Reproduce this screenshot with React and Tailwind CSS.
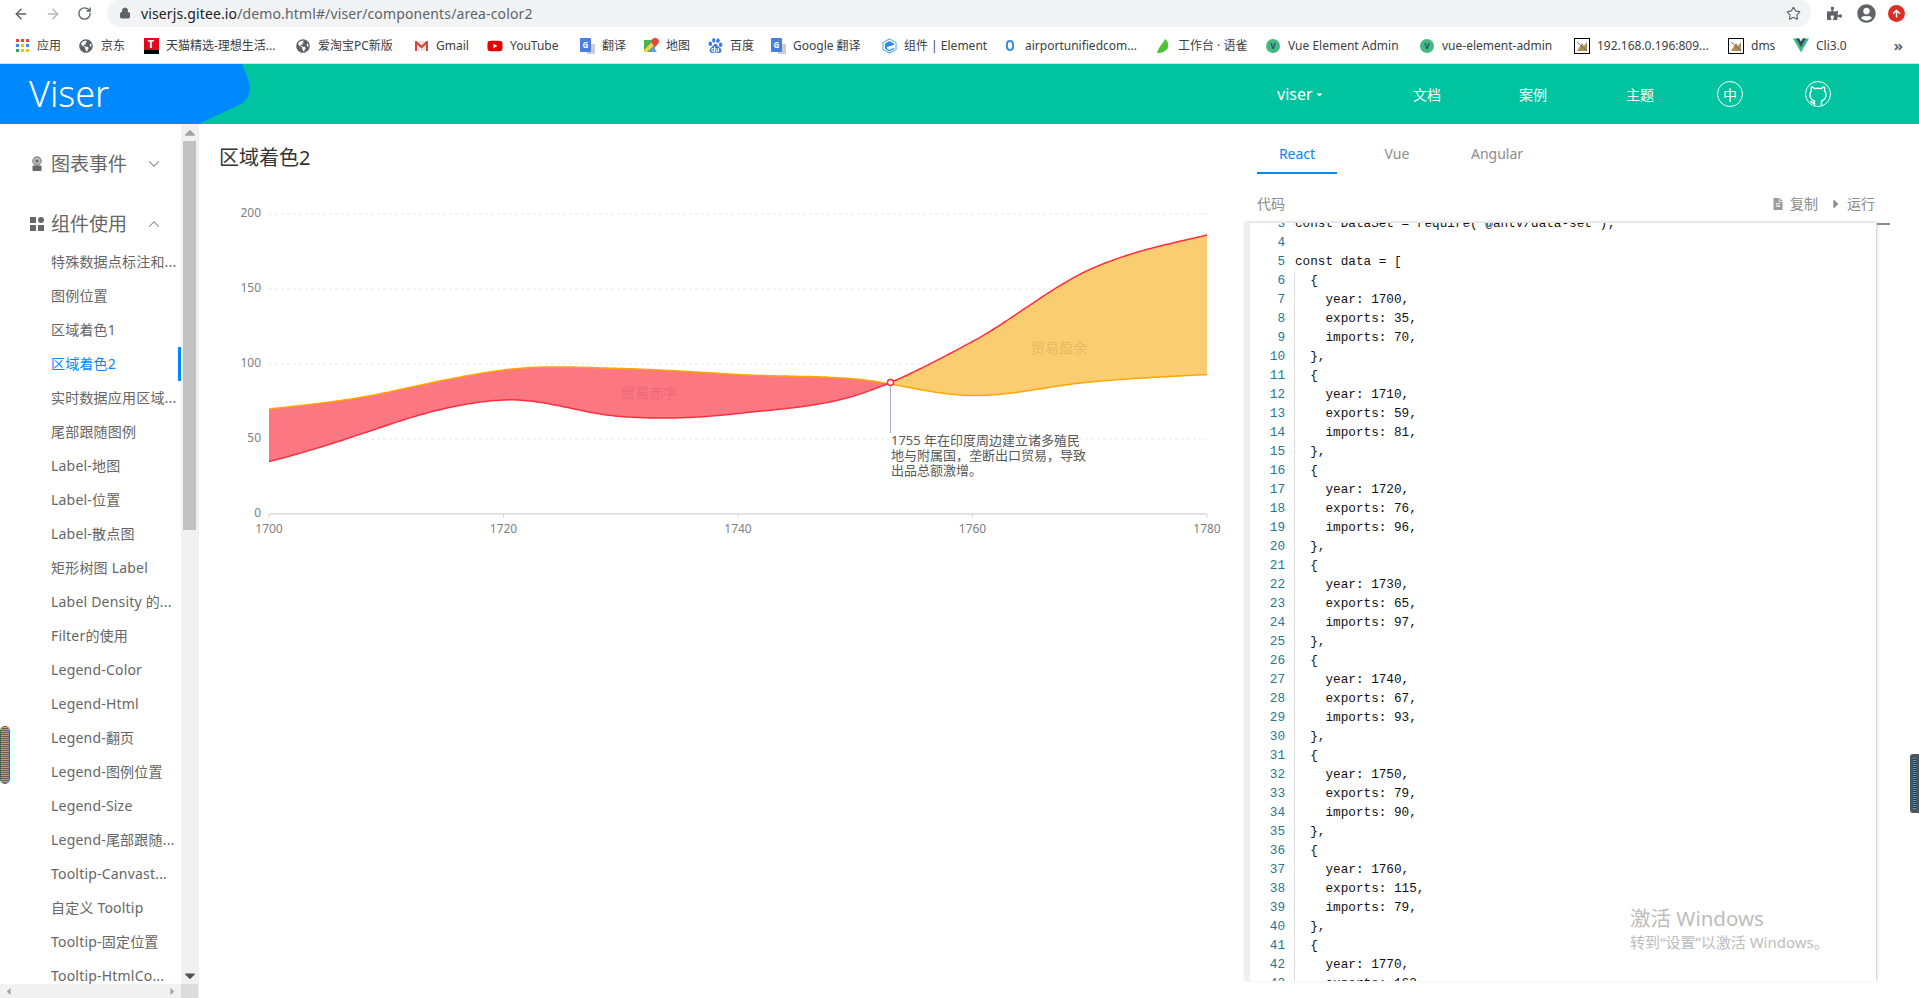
import { ChevronDown, ChevronUp, Star, ArrowLeft, ArrowRight, RotateCw, Lock } from 'lucide-react'
import { FaGlobeAmericas, FaYoutube, FaUserCircle, FaFileAlt, FaCaretRight, FaCaretUp, FaCaretDown, FaCaretLeft, FaPuzzlePiece, FaArrowUp } from 'react-icons/fa'
import { SiBaidu } from 'react-icons/si'

const Globe = () => <FaGlobeAmericas className="text-[14px] text-[#5f6368]" />

const Translate = () => (
  <span className="relative block h-[16px] w-[16px]">
    <span className="absolute bottom-0 right-0 h-[10px] w-[8px] bg-[#c9ccd1]" />
    <span className="absolute left-[1px] top-0 flex h-[14px] w-[11px] items-center justify-center rounded-[1px] bg-[#4a7fe0] text-[8px] font-bold leading-none text-white">G</span>
  </span>
)

const Broken = () => (
  <span className="flex h-[16px] w-[16px] items-center justify-center border border-black bg-white">
    <svg width="12" height="12" viewBox="0 0 12 12">
      <path d="M1 11 L6 3 L8 6 L11 2 V11 Z" fill="#b08d57" />
      <path d="M1 2 L11 11" stroke="#6b6b6b" strokeWidth="1" />
    </svg>
  </span>
)

const VueDot = () => (
  <span className="flex h-[14px] w-[14px] items-center justify-center rounded-full bg-[#42b983] text-[8px] font-bold leading-none text-[#35495e]">V</span>
)

const bookmarks = [
  {
    label: '应用',
    w: 'w-[64px]',
    icon: (
      <span className="grid h-[13px] w-[13px] grid-cols-3 gap-[2px]">
        <i className="bg-[#ea4335]" /><i className="bg-[#ea4335]" /><i className="bg-[#ea4335]" />
        <i className="bg-[#4285f4]" /><i className="bg-[#fbbc05]" /><i className="bg-[#4285f4]" />
        <i className="bg-[#34a853]" /><i className="bg-[#fbbc05]" /><i className="bg-[#fbbc05]" />
      </span>
    ),
  },
  { label: '京东', w: 'w-[65px]', icon: <Globe /> },
  {
    label: '天猫精选-理想生活...',
    w: 'w-[152px]',
    icon: (
      <span className="flex h-[16px] w-[15px] items-start justify-center bg-[linear-gradient(#e3061d_75%,#000_75%)] text-[11px] font-bold leading-[12px] text-white">T</span>
    ),
  },
  { label: '爱淘宝PC新版', w: 'w-[118px]', icon: <Globe /> },
  {
    label: 'Gmail',
    w: 'w-[74px]',
    icon: (
      <svg width="15" height="12" viewBox="0 0 15 12">
        <path d="M2 1 H13 V11 H2 Z" fill="#e6e6e6" />
        <path d="M1 1 L2.5 1 L7.5 5.5 L12.5 1 L14 1 V11 H12 V4.5 L7.5 8.5 L3 4.5 V11 H1 Z" fill="#d8473b" />
      </svg>
    ),
  },
  { label: 'YouTube', w: 'w-[92px]', icon: <FaYoutube className="text-[16px] text-[#e60000]" /> },
  { label: '翻译', w: 'w-[64px]', icon: <Translate /> },
  {
    label: '地图',
    w: 'w-[64px]',
    icon: (
      <svg width="15" height="15" viewBox="0 0 15 15">
        <path d="M0 2 H11 V14 H0 Z" fill="#4caf50" />
        <path d="M0 12 L9 3 L11 5 V7 L3 14 H0 Z" fill="#fbd14b" />
        <path d="M5 14 L9 9 L13 14 Z" fill="#5b9bf0" />
        <path d="M11 0 C13.5 0 15 1.6 15 3.4 C15 5.2 12.8 7 11 9 C9.2 7 7.4 5.2 7.4 3.4 C7.4 1.6 8.8 0 11 0 Z" fill="#e4463b" />
      </svg>
    ),
  },
  { label: '百度', w: 'w-[63px]', icon: <SiBaidu className="text-[15px] text-[#3a7be5]" /> },
  { label: 'Google 翻译', w: 'w-[111px]', icon: <Translate /> },
  {
    label: '组件 | Element',
    w: 'w-[121px]',
    icon: (
      <svg width="15" height="16" viewBox="0 0 15 16">
        <path d="M7.5 1 L14 4.5 V11.5 L7.5 15 L1 11.5 V4.5 Z" fill="#fff" stroke="#5fb3f5" strokeWidth="1.2" />
        <path d="M7.5 3 L12 5.5 V7 L5 9 V10.5 L7.5 12 L12 9.5 V11 L7.5 13.4 L3 10.8 V5.5 Z" fill="#2f8fe8" />
      </svg>
    ),
  },
  {
    label: 'airportunifiedcom...',
    w: 'w-[153px]',
    icon: <span className="block h-[11px] w-[8px] rounded-full border-2 border-[#3b8fe0] bg-white" />,
  },
  {
    label: '工作台 · 语雀',
    w: 'w-[110px]',
    icon: (
      <svg width="15" height="16" viewBox="0 0 15 16">
        <path d="M1 15 C3 8 7 6 9 1 C12 3 13 6 12 9 C11 13 6 15 1 15 Z" fill="#4fc23a" />
      </svg>
    ),
  },
  { label: 'Vue Element Admin', w: 'w-[154px]', icon: <VueDot /> },
  { label: 'vue-element-admin', w: 'w-[155px]', icon: <VueDot /> },
  { label: '192.168.0.196:809...', w: 'w-[154px]', icon: <Broken /> },
  { label: 'dms', w: 'w-[65px]', icon: <Broken /> },
  {
    label: 'Cli3.0',
    w: 'w-[60px]',
    icon: (
      <svg width="17" height="15" viewBox="0 0 256 221">
        <path d="M204.8 0H256L128 220.8 0 0h97.92L128 51.2 157.44 0h47.36Z" fill="#41b883" />
        <path d="M50.56 0L128 133.12 204.8 0h-47.36L128 51.2 97.92 0H50.56Z" fill="#35495e" />
      </svg>
    ),
  },
]

const menuItems = [
  '特殊数据点标注和...', '图例位置', '区域着色1', '区域着色2', '实时数据应用区域...', '尾部跟随图例',
  'Label-地图', 'Label-位置', 'Label-散点图', '矩形树图 Label', 'Label Density 的...', 'Filter的使用',
  'Legend-Color', 'Legend-Html', 'Legend-翻页', 'Legend-图例位置', 'Legend-Size', 'Legend-尾部跟随...',
  'Tooltip-Canvast...', '自定义 Tooltip', 'Tooltip-固定位置', 'Tooltip-HtmlCo...',
]

const data = [
  { year: 1700, exports: 35, imports: 70 },
  { year: 1710, exports: 59, imports: 81 },
  { year: 1720, exports: 76, imports: 96 },
  { year: 1730, exports: 65, imports: 97 },
  { year: 1740, exports: 67, imports: 93 },
  { year: 1750, exports: 79, imports: 90 },
  { year: 1760, exports: 115, imports: 79 },
  { year: 1770, exports: 163, imports: 88 },
  { year: 1780, exports: 186, imports: 93 },
]

const sx = (year) => 269 + (year - 1700) * 11.725
const sy = (v) => 514 - v * 1.5

const at = (key, n) => data[Math.max(0, Math.min(data.length - 1, n))][key]

// slope at a data point: the left part of the chart overshoots a bit, the right part is plain catmull-rom
function slope(key, n) {
  if (n === 0 || n === data.length - 1) return (at(key, n + 1) - at(key, n - 1)) * 0.8
  return (at(key, n + 1) - at(key, n - 1)) * (n >= 5 ? 0.5 : 0.65)
}

function valueAt(key, year) {
  const i = Math.min(Math.floor((year - 1700) / 10), data.length - 2)
  const t = (year - data[i].year) / 10
  const t2 = t * t
  const t3 = t2 * t
  return (
    (2 * t3 - 3 * t2 + 1) * at(key, i) +
    (t3 - 2 * t2 + t) * slope(key, i) +
    (-2 * t3 + 3 * t2) * at(key, i + 1) +
    (t3 - t2) * slope(key, i + 1)
  )
}

const years = []
for (let y = 1700; y <= 1780; y += 0.25) years.push(y)

let crossYear = 1753
for (const y of years) {
  if (valueAt('exports', y) >= valueAt('imports', y)) {
    crossYear = y
    break
  }
}
const crossValue = valueAt('exports', crossYear)
const crossX = Math.round(sx(crossYear)) + 0.5

const line = (key, list) => list.map((y) => `${sx(y).toFixed(1)},${sy(valueAt(key, y)).toFixed(1)}`).join(' ')
const before = years.filter((y) => y <= crossYear)
const after = years.filter((y) => y >= crossYear)
const redArea = `${line('imports', before)} ${line('exports', [...before].reverse())}`
const yellowArea = `${line('exports', after)} ${line('imports', [...after].reverse())}`

function Chart() {
  return (
    <svg width="1046" height="370" viewBox="199 190 1046 370" className="block">
      {[200, 150, 100, 50].map((v) => (
        <line key={v} x1="269" x2="1207" y1={sy(v)} y2={sy(v)} stroke="#e8e8e8" strokeDasharray="3 3" />
      ))}
      {[0, 50, 100, 150, 200].map((v) => (
        <text key={v} x="261" y={sy(v) - 2} textAnchor="end" dominantBaseline="central" fontSize="12" fill="#808080">{v}</text>
      ))}
      <polygon points={redArea} fill="#fb7781" />
      <polygon points={yellowArea} fill="#fbcd71" />
      <polyline points={line('imports', years)} fill="none" stroke="#ffa500" strokeWidth="1.5" />
      <polyline points={line('exports', years)} fill="none" stroke="#ff2d3e" strokeWidth="1.5" />
      <line x1="269" x2="1207" y1="514" y2="514" stroke="#d9d9d9" strokeWidth="1.5" />
      {[1700, 1720, 1740, 1760, 1780].map((y) => (
        <g key={y}>
          <line x1={sx(y)} x2={sx(y)} y1="514" y2="518" stroke="#d9d9d9" />
          <text x={sx(y)} y="528" textAnchor="middle" dominantBaseline="central" fontSize="12" fill="#808080">{y}</text>
        </g>
      ))}
      <text x="649" y="392" textAnchor="middle" dominantBaseline="central" fontSize="14" fill="#ec6a75">贸易赤字</text>
      <text x="1059" y="347" textAnchor="middle" dominantBaseline="central" fontSize="14" fill="#e8b95f">贸易盈余</text>
      <line x1={crossX} x2={crossX} y1="386" y2="433" stroke="#a3b1bf" />
      <circle cx={crossX} cy={sy(crossValue)} r="3" fill="#fff" stroke="#ff2d3e" strokeWidth="1.5" />
      <g fontSize="13" fill="#595959">
        <text x="891" y="445">1755 年在印度周边建立诸多殖民</text>
        <text x="891" y="460">地与附属国，垄断出口贸易，导致</text>
        <text x="891" y="475">出品总额激增。</text>
      </g>
    </svg>
  )
}

const codeLines = [`const DataSet = require('@antv/data-set');`, '', 'const data = [']
data.slice(0, 8).forEach((d) => {
  codeLines.push('  {', `    year: ${d.year},`, `    exports: ${d.exports},`, `    imports: ${d.imports},`, '  },')
})

function CodeBox() {
  return (
    <div className="flex items-start">
      <div className="h-[758px] w-[632px] overflow-hidden border-l-[5px] border-r border-l-[#f0f0f0] border-r-[#dcdcdc] bg-white font-['Liberation_Mono',monospace] text-[12.7px] leading-[19px] shadow-[0_-1px_3px_rgba(0,0,0,0.18)]">
        <div className="-mt-[9px]">
          {codeLines.map((text, i) => (
            <div key={i} className="flex h-[19px]">
              <span className="w-[35px] text-right text-[#237893]">{i + 3}</span>
              <span className={`ml-[9px] whitespace-pre border-l text-[#111] ${i > 2 ? 'border-l-[#dcdcdc]' : 'border-l-transparent'}`}>{text}</span>
            </div>
          ))}
        </div>
      </div>
      <div className="h-[2px] w-[13px] bg-[#8a8a8a]" />
    </div>
  )
}

function Sidebar() {
  return (
    <aside className="flex w-[199px] shrink-0 flex-col">
      <div className="flex min-h-0 flex-1">
        <div className="h-[860px] w-[181px] overflow-hidden bg-white pt-[29px] text-[#666]">
          <div className="flex h-[22px] items-center">
            <svg width="14" height="16" viewBox="0 0 14 16" className="ml-[30px] mr-[7px] shrink-0">
              <circle cx="7" cy="5" r="4.2" fill="#b9b9b9" stroke="#777" />
              <circle cx="7" cy="5" r="1.6" fill="#666" />
              <rect x="2.5" y="9.5" width="9" height="5.5" rx="1" fill="#666" />
            </svg>
            <span className="w-[94px] text-[19px] leading-[22px]">图表事件</span>
            <ChevronDown className="h-[18px] w-[18px] text-[#777]" strokeWidth={1.4} />
          </div>
          <div className="mt-[38px] flex h-[22px] items-center">
            <span className="ml-[30px] mr-[7px] grid h-[14px] w-[14px] shrink-0 grid-cols-2 gap-[2px]">
              <i className="bg-[#666]" /><i className="rounded-full bg-[#666]" /><i className="bg-[#666]" /><i className="bg-[#666]" />
            </span>
            <span className="w-[94px] text-[19px] leading-[22px]">组件使用</span>
            <ChevronUp className="h-[18px] w-[18px] text-[#777]" strokeWidth={1.4} />
          </div>
          <ul className="mt-[10px] text-[14px] tracking-[0.2px]">
            {menuItems.map((item) => (
              <li key={item} className={`relative h-[34px] whitespace-nowrap pl-[51px] leading-[34px] ${item === '区域着色2' ? 'text-[#0089ff]' : ''}`}>
                {item}
                {item === '区域着色2' && <span className="absolute right-0 top-0 h-[34px] w-[3px] bg-[#0089ff]" />}
              </li>
            ))}
          </ul>
        </div>
        <div className="flex h-[860px] w-[18px] flex-col items-center bg-[#f1f1f1] px-[2px] text-[#a3a3a3]">
          <FaCaretUp className="h-[17px] shrink-0 text-[12px]" />
          <div className="h-[389px] w-[13px] -translate-x-[1px] bg-[#c1c1c1]" />
          <div className="flex-1" />
          <FaCaretDown className="h-[17px] shrink-0 text-[12px] text-[#505050]" />
        </div>
      </div>
      <div className="flex h-[14px] bg-[#f1f1f1] text-[#a3a3a3]">
        <div className="flex w-[181px] items-center justify-between px-[3px]">
          <FaCaretLeft className="text-[11px]" />
          <FaCaretRight className="text-[11px]" />
        </div>
        <div className="w-[17px] bg-[#dcdcdc]" />
      </div>
    </aside>
  )
}

export default function App() {
  return (
    <div className="relative h-[998px] w-[1919px] overflow-hidden bg-white font-['Noto_Sans','Noto_Sans_CJK_SC',sans-serif]">
      {/* browser chrome */}
      <div className="h-[64px] border-b border-b-[#dadce0] bg-white">
        <div className="flex h-[28px] items-start">
          <div className="flex h-[27px] w-[107px] items-center text-[#5f6368]">
            <ArrowLeft className="ml-[13px] h-[16px] w-[16px]" strokeWidth={2.2} />
            <ArrowRight className="ml-[16px] h-[16px] w-[16px] text-[#b4b6b9]" strokeWidth={2.2} />
            <RotateCw className="ml-[16px] h-[15px] w-[15px]" strokeWidth={2.2} />
          </div>
          <div className="-mt-[1px] flex h-[28px] w-[1704px] items-center rounded-full bg-[#f1f3f4] pl-[12px] pr-[10px] text-[14px] leading-[27px]">
            <Lock className="h-[12px] w-[12px] fill-[#5f6368] text-[#5f6368]" />
            <span className="ml-[10px] tracking-[0.13px] text-[#202124]">viserjs.gitee.io</span>
            <span className="tracking-[0.13px] text-[#5f6368]">/demo.html#/viser/components/area-color2</span>
            <Star className="ml-auto h-[15px] w-[15px] text-[#5f6368]" strokeWidth={1.8} />
          </div>
          <div className="flex h-[27px] flex-1 items-center text-[#5f6368]">
            <FaPuzzlePiece className="ml-[16px] text-[15px]" />
            <FaUserCircle className="ml-[15px] text-[19px]" />
            <span className="ml-[12px] flex h-[17px] w-[17px] items-center justify-center rounded-full bg-[#d93025]">
              <FaArrowUp className="text-[9px] text-white" />
            </span>
          </div>
        </div>
        <div className="flex h-[35px] items-center pl-[14px] pr-[16px] text-[12px] text-[#3c4043]">
          {bookmarks.map((b) => (
            <div key={b.label} className={`flex shrink-0 items-center ${b.w}`}>
              <span className="flex w-[16px] shrink-0 justify-center">{b.icon}</span>
              <span className="ml-[7px] whitespace-nowrap">{b.label}</span>
            </div>
          ))}
          <span className="ml-auto text-[15px] font-bold text-[#5f6368]">»</span>
        </div>
      </div>

      {/* site header */}
      <header className="relative flex h-[60px] items-center bg-[#00c4a0] text-white">
        <svg width="250" height="60" viewBox="0 0 250 60" className="absolute left-0 top-0">
          <path d="M0 0 H242 C247 12 250 18 250 24 C250 31 247 35 243 39 L199 60 H0 Z" fill="#0089ff" />
        </svg>
        <span className="relative ml-[29px] text-[36px] font-light leading-[60px]">Viser</span>
        <nav className="ml-auto flex items-center pr-[88px] text-[14px]">
          <span className="flex w-[136px] items-center text-[16px]">
            viser
            <FaCaretDown className="ml-[2px] text-[9px]" />
          </span>
          <span className="w-[106px]">文档</span>
          <span className="w-[107px]">案例</span>
          <span className="w-[91px]">主题</span>
          <span className="flex h-[26px] w-[26px] items-center justify-center rounded-full border border-white">中</span>
          <svg width="26" height="26" viewBox="0 0 26 26" fill="none" stroke="#fff" className="ml-[62px]">
            <circle cx="13" cy="13" r="12.5" />
            <path d="M9.5 24 V20 C6.5 19 5 17 5 13.5 C5 12 5.5 10.8 6.5 9.8 C6 8.4 6.2 7.2 6.5 6 C8 6.1 9.2 6.9 10.2 7.7 C12 7.2 14 7.2 15.8 7.7 C16.8 6.9 18 6.1 19.5 6 C19.8 7.2 20 8.4 19.5 9.8 C20.5 10.8 21 12 21 13.5 C21 17 19.5 19 16.5 20 V24" strokeWidth="1.4" />
            <path d="M9.5 22 C7.5 22.3 6.6 21.4 5.6 20" strokeWidth="2" />
          </svg>
        </nav>
      </header>

      <div className="flex h-[874px]">
        <Sidebar />
        <main className="w-[1046px] shrink-0 pt-[20px]">
          <h1 className="ml-[20px] text-[20px] leading-[28px] text-[#333]">区域着色2</h1>
          <div className="mt-[18px]">
            <Chart />
          </div>
        </main>
        <section className="flex-1">
          <div className="ml-[12px] mt-[12px] flex h-[38px] text-center text-[14px] leading-[20px] text-[#8c8c8c]">
            <div className="w-[80px] border-b-2 border-b-[#0089ff] pt-[8px] text-[#0089ff]">React</div>
            <div className="ml-[25px] w-[70px] pt-[8px]">Vue</div>
            <div className="ml-[16px] w-[98px] pt-[8px]">Angular</div>
          </div>
          <div className="mt-[20px] flex h-[20px] w-[630px] items-center pl-[12px] text-[14px] leading-[20px] text-[#8c8c8c]">
            <span>代码</span>
            <FaFileAlt className="ml-auto text-[12px] text-[#9a9a9a]" />
            <span className="ml-[6px]">复制</span>
            <FaCaretRight className="ml-[11px] text-[14px] text-[#8c8c8c]" />
            <span className="ml-[4px]">运行</span>
          </div>
          <div className="mt-[9px]">
            <CodeBox />
          </div>
        </section>
      </div>

      {/* desktop overlays */}
      <div className="absolute left-[1630px] top-[905px] text-[#bdbdbd]">
        <p className="text-[20.5px] leading-[26px]">激活 Windows</p>
        <p className="mt-[1px] text-[15px] leading-[20px]">转到“设置”以激活 Windows。</p>
      </div>
      <div className="absolute left-[1px] top-[727px] h-[56px] w-[8px] rounded-[4px] bg-[repeating-linear-gradient(#e09a3a_0,#e09a3a_1px,#5c5c5c_1px,#5c5c5c_2px)] ring-1 ring-[#5c5c5c]" />
      <div className="absolute left-[1910px] top-[754px] flex h-[59px] w-[9px] justify-center rounded-l-[3px] bg-[#4a5560] py-[4px]">
        <div className="w-[3px] bg-[repeating-linear-gradient(#29aef0_0,#29aef0_1px,#27313a_1px,#27313a_2px)]" />
      </div>
    </div>
  )
}
